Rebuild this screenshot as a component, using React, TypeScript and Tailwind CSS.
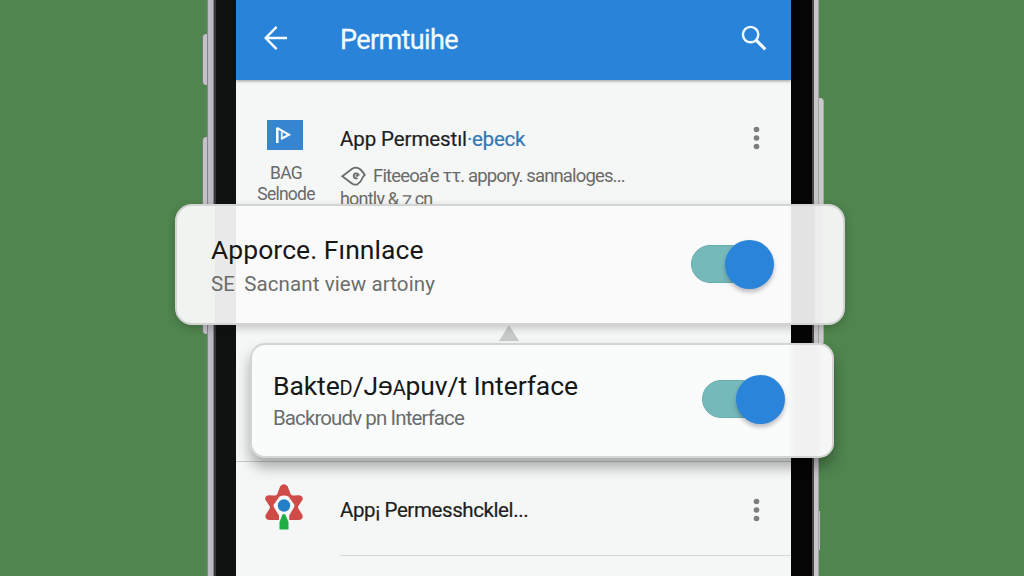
import React from 'react';
import { clsx } from 'clsx';

// Vertical overflow dots
const MoreDots: React.FC<{ className?: string }> = ({ className = '' }) => (
  <svg viewBox="0 0 8 24" className={clsx('h-6 w-2', className)} fill="#7d7e7e">
    <circle cx="4.5" cy="3.5" r="2.8" />
    <circle cx="4.5" cy="12" r="2.8" />
    <circle cx="4.5" cy="20.5" r="2.8" />
  </svg>
);

const BackIcon = () => (
  <svg viewBox="0 0 24 26" className="h-[26px] w-6" fill="none" stroke="#f4fbff" strokeWidth="2.5">
    <path d="M12.6 1.8 1.7 13l10.9 11.2M2 13h21" />
  </svg>
);

const SearchIcon = () => (
  <svg viewBox="0 0 26 26" className="size-[26px]" fill="none" stroke="#f0fbff">
    <circle cx="9.6" cy="9.6" r="7.7" strokeWidth="2.4" />
    <path d="m15.3 15.3 9 9" strokeWidth="3.2" />
  </svg>
);

const PlayTile = () => (
  <svg viewBox="0 0 36 30" className="h-[30px] w-9">
    <rect width="36" height="30" fill="#3585d0" />
    <path d="M10.3 23V7.5" stroke="#f6fbff" strokeWidth="2.6" />
    <path d="m10.5 8.2 11.5 6.6-8 4.2" fill="none" stroke="#f6fbff" strokeWidth="2.1" />
    <path d="M14.8 11.5v7" stroke="#e5f2fc" strokeWidth="1.8" />
  </svg>
);

const EyeIcon = () => (
  <svg viewBox="0 0 26 20" className="h-5 w-[26px]" fill="none" stroke="#6b6d6c" strokeWidth="1.8">
    <path d="M2.3 10.2 12.500 2.600Q16.500 .2 20.500 3.500q3 3 4.200 5.500l-1.700 2q-2 5-5.500 7.300-3 1.200-6-1.100z" />
    <path d="M18.700 9.700a2.500 2.500 0 1 0-1.200 2.300M15.700 9.700h2.400" strokeWidth="1.9" />
  </svg>
);

const FlowerIcon = () => (
  <svg viewBox="0 0 40 46" className="h-[46px] w-10">
    <path
      d="M16.2 2.2q3.8-4 7.4 0l3.2 8.3q1 1.300 3 1l5.6-.3q3.800.8 3.300 4.300l-4.5 6.800q-.5 1.200.2 2.300l4.200 6.600q.6 4-3.400 4.900H24l-4-3-4 3H4.800q-4-1-3.300-4.900l4.100-6.600q.6-1.100 0-2.300L1.200 15.500q-.5-3.600 3.300-4.300l5.600.3q2 .2 3-1z"
      fill="#cf4b47"
    />
    <path d="M15.500 12.500q4.500-2 9 0l5.700 8q.5 1 0 2.500l-5 8.500v6H15v-6L9.800 23q-.5-1.500 0-2.500z" fill="#f7f8f8" />
    <circle cx="20" cy="21.5" r="6.2" fill="#247fc9" />
    <path d="M18.500 30.500q1.300-1 2.800 0l3.200 7.500v7.500h-9V38z" fill="#1fae43" />
  </svg>
);

const Toggle = () => (
  <div className="mt-[5px] flex h-[50px] w-[83px] items-center">
    <div className="h-[38px] w-[60px] rounded-full border border-[#68adad] bg-[#76b9bb]" />
    <div className="-ml-[26px] size-[49px] shrink-0 rounded-full bg-[#2a84da] shadow-[0_3px_4px_rgba(40,40,60,0.3)]" />
  </div>
);

interface SettingCardProps {
  title: React.ReactNode;
  subtitle: React.ReactNode;
  className?: string;
}

const SettingCard: React.FC<SettingCardProps> = ({ title, subtitle, className = '' }) => (
  <section
    className={clsx(
      'absolute flex items-start justify-between whitespace-nowrap border-2 border-[#d3d5d4]',
      className
    )}
  >
    <div>
      <h2 className="text-[26.5px] leading-8 text-[#161817]">{title}</h2>
      <p className="text-[20.5px] leading-8 text-[#6b6d6c]">{subtitle}</p>
    </div>
    <Toggle />
  </section>
);

const AppBar = () => (
  <header className="relative flex h-20 items-start bg-[#2883d9] pr-6 pl-7 pt-[25px] shadow-[0_1px_3px_rgba(0,0,0,0.4)]">
    <BackIcon />
    <h1 className="ml-[52px] flex-1 text-[27px] leading-[30px] tracking-[-0.6px] text-[#f4fbff] [-webkit-text-stroke:0.3px_#f4fbff]">
      Permtuihe
    </h1>
    <SearchIcon />
  </header>
);

export default function App() {
  return (
    <main className="relative flex h-[576px] w-[1024px] overflow-hidden bg-[#50854f] pl-[202px] font-['Roboto',sans-serif]">
      {/* Left hardware buttons */}
      <div className="w-[5px] pt-[34px]">
        <div className="h-[51px] rounded-l border-l border-[#77797a] bg-[#c4c2c9]" />
        <div className="mt-[52px] h-[197px] rounded-l border-l border-[#77797a] bg-[#c4c2c9]" />
      </div>
      <div className="w-[7px] border-x border-[#85868a] bg-[#bcbac1]" />
      <div className="w-[22px] border-l-2 border-[#333536] bg-[#101211]" />

      <div className="flex h-full w-[555px] flex-col bg-[#f5f6f6]">
        <AppBar />

        <div className="flex h-[382px] border-b border-[#c9cbcb] pt-10">
          <div className="flex w-[104px] flex-col items-center pr-[7px]">
            <PlayTile />
            <div className="mt-[13px] ml-[3px] text-center text-[17.5px] leading-[21px] tracking-[-0.75px] text-[#686a69]">
              <p>BAG</p>
              <p>Selnode</p>
            </div>
          </div>
          <div className="flex-1 whitespace-nowrap">
            <p className="mt-[7px] text-[20.5px] leading-6 tracking-[-0.1px] text-[#1d1f1e] [-webkit-text-stroke:0.2px_#1d1f1e]">
              App Permestıl
              <span className="tracking-[-0.35px] text-[#3478b4] [-webkit-text-stroke:0.2px_#3478b4]">·eþeck</span>
            </p>
            <div className="mt-[13px] flex items-center text-[18.5px] leading-6 tracking-[-0.85px] text-[#696b6a]">
              <EyeIcon />
              <span className="ml-[7px]">Fiteeoaʼe ττ. appory. sannaloges...</span>
            </div>
            <p className="-mt-px text-[18px] leading-6 tracking-[-0.8px] text-[#696b6a]">hontly &amp; ⁊ cn</p>
          </div>
          <MoreDots className="mt-[6px] mr-[31px]" />
        </div>

        <div className="ml-[104px] flex h-[94px] items-start border-b border-[#d5d7d7] pt-9">
          <p className="flex-1 whitespace-nowrap text-[20.5px] leading-6 tracking-[-0.4px] text-[#1d1f1e] [-webkit-text-stroke:0.2px_#1d1f1e]">
            App¡ Permesshcklel...
          </p>
          <MoreDots className="mr-[31px]" />
        </div>
      </div>

      <div className="w-[23px] border-r-2 border-[#4c4748] bg-[#050505]" />
      <div className="w-[5px] border-r border-[#a3a3a3] bg-[#c7c5ca]" />
      {/* Right hardware buttons */}
      <div className="w-[5px] pt-[98px]">
        <div className="h-[247px] rounded-r border-r border-[#a6aaa6] bg-[#cbc9ce]" />
        <div className="mt-[166px] h-[39px] w-px bg-[#c0bfc4]" />
      </div>

      <div className="absolute top-[484px] left-[264px]">
        <FlowerIcon />
      </div>

      {/* Pointer between the two floating cards */}
      <svg viewBox="0 0 22 18" className="absolute top-[325px] left-[498px] h-[18px] w-[22px]">
        <path d="M11 0 21 16H1z" fill="#c8caca" />
      </svg>

      <SettingCard
        className="top-[204px] left-[175px] h-[121px] w-[670px] rounded-[17px] bg-[linear-gradient(90deg,#f1f3f1_0_38px,#e9e9e9_38px_59px,#fafafa_59px_614px,#e3e3e3_614px_637px,#ededee_639px_644px,#f0f2ef_646px)] pt-7 pr-[69px] pl-[34px] shadow-[0_3px_8px_rgba(0,0,0,0.2)]"
        title={<span className="tracking-[0.05px]">Apporce. Fınnlace</span>}
        subtitle={
          <span className="relative top-[2px] tracking-[0.1px]">
            SE <span className="ml-1">Sacnant view artoiny</span>
          </span>
        }
      />
      <SettingCard
        className="top-[343px] left-[250px] h-[115px] w-[584px] rounded-[15px] bg-[linear-gradient(90deg,#fafbfb_0_535px,#f1f1f2_543px_564px,#f6f6f6_570px)] pt-6 pr-[47px] pl-[21px] shadow-[0_9px_14px_rgba(0,0,0,0.32)]"
        title={
          <span className="relative top-px tracking-[-0.1px]">
            Bakte<span className="text-[20px]">D</span>/Jɘ<span className="text-[20px]">A</span>puv/t Interface
          </span>
        }
        subtitle={<span className="relative -top-px tracking-[-0.9px]">Backroudv pn Interface</span>}
      />
    </main>
  );
}
